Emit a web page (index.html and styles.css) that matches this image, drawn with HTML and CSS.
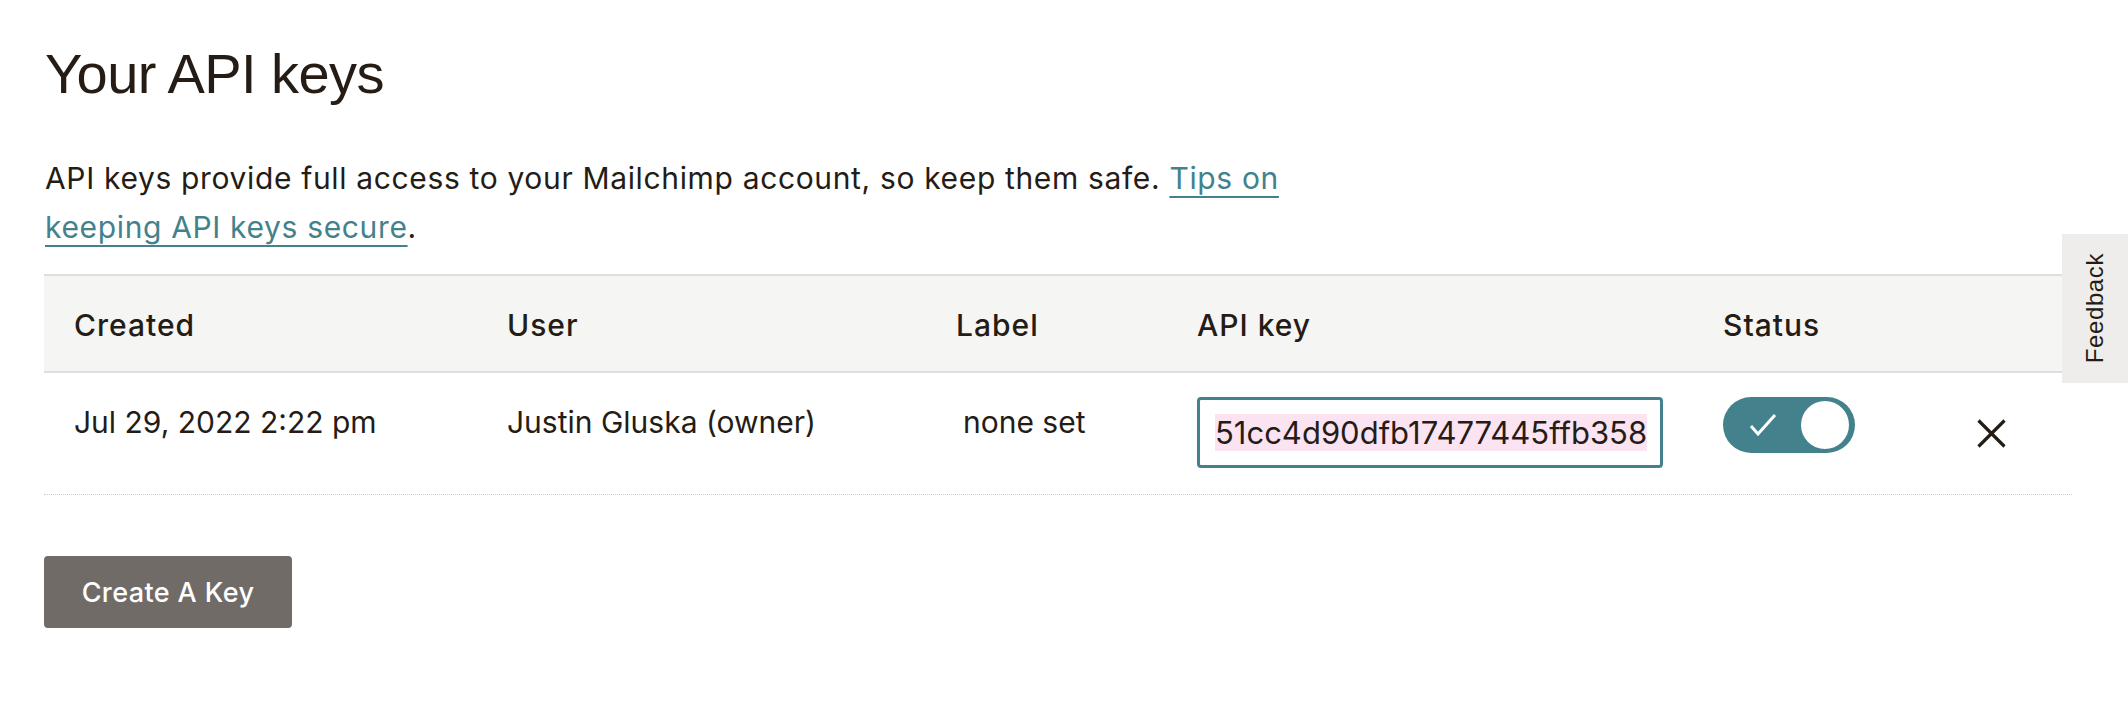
FILE: index.html
```html
<!DOCTYPE html>
<html lang="en">
<head>
<meta charset="utf-8">
<title>Your API keys</title>
<link rel="stylesheet" href="styles.css">
</head>
<body>
<main class="page">
  <h1 class="title">Your API keys</h1>
  <p class="intro">API keys provide full access to your Mailchimp account, so keep them safe. <a class="link" href="#">Tips on keeping API keys secure</a>.</p>

  <div class="keys">
    <div class="keys-row keys-head">
      <div class="cell">Created</div>
      <div class="cell">User</div>
      <div class="cell">Label</div>
      <div class="cell">API key</div>
      <div class="cell">Status</div>
      <div class="cell"></div>
    </div>
    <div class="keys-row keys-body">
      <div class="cell cell-text">Jul 29, 2022 2:22 pm</div>
      <div class="cell cell-text">Justin Gluska (owner)</div>
      <div class="cell cell-text cell-label">none set</div>
      <div class="cell cell-input">
        <div class="key-field"><span class="key-value">51cc4d90dfb17477445ffb358</span></div>
      </div>
      <div class="cell cell-toggle">
        <div class="toggle">
          <svg class="toggle-check" width="30" height="26" viewBox="0 0 30 26"><path d="M3 14 L10 22 L27 3" fill="none" stroke="#fff" stroke-width="3"/></svg>
          <span class="toggle-knob"></span>
        </div>
      </div>
      <div class="cell cell-remove">
        <svg class="remove-icon" width="29" height="29" viewBox="0 0 29 29"><path d="M1.5 1.5 L27.5 27.5 M27.5 1.5 L1.5 27.5" fill="none" stroke="#241c15" stroke-width="3.2"/></svg>
      </div>
    </div>
  </div>

  <button class="create">Create A Key</button>
</main>

<aside class="feedback"><span class="feedback-text">Feedback</span></aside>
</body>
</html>
```

FILE: styles.css
```css
* { box-sizing: border-box; }

html, body {
  margin: 0;
  padding: 0;
  background: #ffffff;
}

body {
  font-family: "Inter", "Liberation Sans", sans-serif;
  color: #241c15;
}

.page {
  padding: 40px 56px 0 44px;
}

.title {
  margin: 0 0 0 1px;
  font-family: "Liberation Sans", sans-serif;
  font-weight: 400;
  font-size: 56px;
  line-height: 67px;
  letter-spacing: -0.6px;
  color: #241c15;
}

.intro {
  margin: 47px 0 0 1px;
  max-width: 1268px;
  font-size: 30px;
  line-height: 49px;
  letter-spacing: 0.65px;
  color: #241c15;
}

.link {
  color: #43828c;
  text-decoration: underline;
  text-decoration-thickness: 2px;
  text-underline-offset: 7px;
}

.keys {
  margin-top: 22px;
  width: 2028px;
}

.keys-row {
  display: grid;
  grid-template-columns: 433px 449px 241px 526px 254px 1fr;
}

.keys-head {
  background: #f5f5f3;
  border-top: 2px solid #dfdedc;
  border-bottom: 2px solid #dfdedc;
  font-weight: 500;
  font-size: 30px;
  line-height: 34px;
  letter-spacing: 1px;
}

.keys-head .cell {
  padding: 32px 0 29px 30px;
}

.keys-body {
  border-bottom: 1px dotted #cfcfcd;
  font-size: 30px;
  line-height: 34px;
  align-items: start;
}

.cell {
  padding-left: 30px;
}

.cell-text {
  padding-top: 32px;
}

.cell-label {
  padding-left: 37px;
}

.cell-input {
  padding-top: 24px;
  padding-bottom: 26px;
}

.key-field {
  width: 466px;
  height: 71px;
  border: 3px solid #43828c;
  border-radius: 4px;
  padding: 13px 15px;
  overflow: hidden;
  white-space: nowrap;
  font-size: 31px;
  line-height: 39px;
}

.key-value {
  background: #fbe3f2;
}

.cell-toggle {
  padding-top: 24px;
}

.toggle {
  width: 132px;
  height: 56px;
  border-radius: 28px;
  background: #43828c;
  display: flex;
  align-items: center;
  justify-content: space-between;
  padding: 0 6px 0 25px;
}

.toggle-check {
  display: block;
}

.toggle-knob {
  width: 48px;
  height: 48px;
  border-radius: 50%;
  background: #ffffff;
}

.cell-remove {
  padding-top: 46px;
}

.remove-icon {
  display: block;
}

.create {
  margin-top: 61px;
  width: 248px;
  height: 72px;
  border: none;
  border-radius: 4px;
  background: #716b67;
  color: #ffffff;
  font-family: "Inter", "Liberation Sans", sans-serif;
  font-weight: 500;
  font-size: 27px;
  letter-spacing: 0.4px;
  padding: 0;
}

.feedback {
  position: fixed;
  top: 234px;
  right: 0;
  width: 66px;
  height: 149px;
  background: #eeedeb;
  display: flex;
  align-items: center;
  justify-content: center;
}

.feedback-text {
  writing-mode: vertical-rl;
  transform: rotate(180deg);
  font-family: "Liberation Sans", sans-serif;
  font-size: 24px;
  letter-spacing: 0.6px;
  color: #241c15;
}
```
